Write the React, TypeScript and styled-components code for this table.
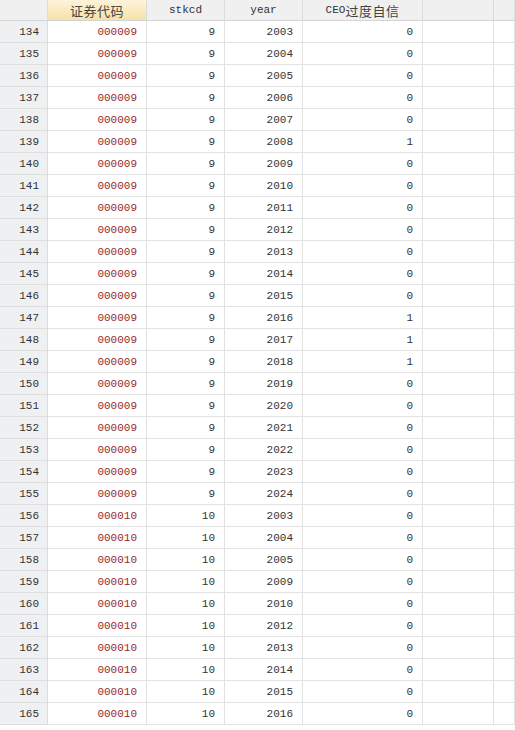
import React from "react";
import styled, { createGlobalStyle } from "styled-components";

const Global = createGlobalStyle`
  html, body { margin: 0; padding: 0; background: #ffffff; }
  body { overflow: hidden; }
`;

const COLS = "48px 99px 78px 78px 120px 71px 1fr";

const Grid = styled.div`
  display: grid;
  grid-template-columns: ${COLS};
  width: 515px;
  font-family: "Liberation Mono", "Courier New", monospace;
  font-size: 11px;
  color: #333;
`;

const Head = styled.div<{ $sel?: boolean }>`
  height: 21px;
  box-sizing: border-box;
  display: flex;
  align-items: center;
  justify-content: center;
  border-right: 1px solid #dcdcdc;
  border-bottom: 1px solid #d4d4d4;
  background: ${(p) => (p.$sel ? "linear-gradient(#fdf4da, #f6e1aa)" : "#f0f0f0")};
  color: #333;
  white-space: nowrap;
`;

const CjkText = styled.span`
  font-family: "Noto Sans CJK SC", "Liberation Sans", sans-serif;
  font-size: 13px;
  letter-spacing: 0.5px;
  color: #444;
`;

const Latin = styled.span`
  font-family: "Liberation Mono", monospace;
  font-size: 11px;
`;

const RowNum = styled.div`
  height: 22px;
  box-sizing: border-box;
  display: flex;
  align-items: center;
  justify-content: flex-end;
  padding: 1px 8px 0 0;
  background: #eef0f2;
  border-right: 1px solid #dcdcdc;
  border-bottom: 1px solid #dedede;
  color: #333;
`;

const Cell = styled.div<{ $red?: boolean }>`
  height: 22px;
  box-sizing: border-box;
  display: flex;
  align-items: center;
  justify-content: flex-end;
  padding: 1px 9px 0 0;
  border-right: 1px solid #e2e2e2;
  border-bottom: 1px solid #e2e2e2;
  color: ${(p) => (p.$red ? "#962a2e" : "#333")};
  background: #fff;
`;

type Row = { n: number; code: string; stk: number; year: number; ceo: number };

const years10 = [2003, 2004, 2005, 2009, 2010, 2012, 2013, 2014, 2015, 2016];
const ones = new Set([139, 147, 148, 149]);

const rows: Row[] = [];
for (let i = 0; i < 22; i++) {
  const n = 134 + i;
  rows.push({ n, code: "000009", stk: 9, year: 2003 + i, ceo: ones.has(n) ? 1 : 0 });
}
years10.forEach((y, i) => {
  const n = 156 + i;
  rows.push({ n, code: "000010", stk: 10, year: y, ceo: 0 });
});

export default function App() {
  return (
    <>
      <Global />
      <Grid>
        <Head />
        <Head $sel>
          <CjkText>证券代码</CjkText>
        </Head>
        <Head>stkcd</Head>
        <Head>year</Head>
        <Head>
          <Latin>CEO</Latin>
          <CjkText>过度自信</CjkText>
        </Head>
        <Head />
        <Head />
        {rows.map((r) => (
          <React.Fragment key={r.n}>
            <RowNum>{r.n}</RowNum>
            <Cell $red>{r.code}</Cell>
            <Cell>{r.stk}</Cell>
            <Cell>{r.year}</Cell>
            <Cell>{r.ceo}</Cell>
            <Cell />
            <Cell />
          </React.Fragment>
        ))}
      </Grid>
    </>
  );
}
